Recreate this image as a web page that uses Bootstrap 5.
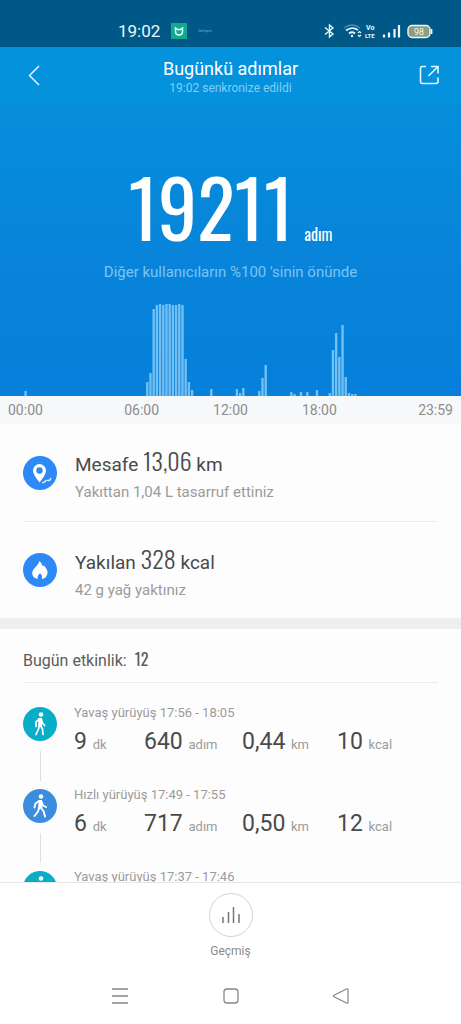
<!DOCTYPE html>
<html lang="tr">
<head>
<meta charset="utf-8">
<meta name="viewport" content="width=device-width, initial-scale=1">
<title>Bugünkü adımlar</title>
<link href="https://cdn.jsdelivr.net/npm/bootstrap@5.3.0/dist/css/bootstrap.min.css" rel="stylesheet">
<style>
  body { font-family: Roboto, sans-serif; background: #fdfdfd; color: #4a4a4a; }
  svg { display: block; flex-shrink: 0; }
  .slim { font-family: Oswald, "Roboto Condensed", Roboto, sans-serif; font-weight: 300; }
  .status-bar { background: #005887; color: #e9f7fd; height: 47px; padding: 14px 27px 0 118px; }
  .status-bar .clock { font-size: 17px; line-height: 24px; }
  .status-bar .tiny { font-size: 4px; color: #6fb0d4; }
  .hero { background: linear-gradient(#0492dc, #0884da 60%, #0680da); color: #fff; }
  .top-bar { height: 56px; padding: 0 16px; background: #0492dc; }
  .top-bar h1 { font-size: 18px; line-height: 22px; font-weight: 400; }
  .top-bar p { font-size: 12px; line-height: 16px; color: #84cdf3; }
  .icon-btn { border: 0; background: none; padding: 6px; color: #e4f6ff; }
  .total { height: 148px; padding-top: 64px; gap: 11px; }
  .total .num { font-size: 78px; line-height: 78px; font-weight: 400; }
  .total .unit { font-size: 16px; font-weight: 400; }
  .rank { font-size: 15px; line-height: 20px; color: #7cc5f3; padding-top: 11px; padding-bottom: 22px; }
  .chart { height: 92px; width: 100%; }
  .axis { background: #f7f8fa; color: #8d8d8d; font-size: 14px; line-height: 28px; padding: 0 8px; }
  .axis .mid { gap: 54px; }
  .stat { margin: 0 24px 0 23px; gap: 18px; height: 97px; }
  .stat + .stat { border-top: 1px solid #ebebeb; }
  .stat h2 { font-size: 19px; line-height: 26px; font-weight: 400; padding-top: 4px; }
  .stat h2 .slim { font-size: 24px; }
  .stat p { font-size: 15px; line-height: 20px; color: #9b9b9b; padding-top: 4px; }
  .band { height: 11px; background: #efefef; }
  .acts { padding: 0 23px; }
  .acts h2 { font-size: 16px; line-height: 22px; font-weight: 400; color: #5c5c5c; padding: 19px 0 10px; margin-bottom: 23px; border-bottom: 1px solid #ebebeb; }
  .acts h2 .slim { font-size: 16px; font-weight: 400; }
  .act { gap: 17px; height: 82px; }
  .rail { gap: 10px; padding-top: 1px; }
  .rail::after { content: ""; width: 1px; height: 30px; background: #dedede; }
  .act .when { font-size: 13px; line-height: 14px; color: #9b9b9b; }
  .vals { grid-template-columns: 70px 98px 95px auto; font-size: 23px; line-height: 28px; padding-top: 8px; }
  .vals small { font-size: 13px; color: #9b9b9b; }
  .bottom { border-top: 1px solid #e6e6e6; background: #fff; }
  .history { border: 0; background: none; padding: 10px 12px 0; color: #8a8a8a; font-size: 12px; line-height: 16px; }
  .history .ring { width: 44px; height: 44px; border: 1px solid #d4d4d4; margin-bottom: 6px; }
  .sysnav { padding: 19px 104px 14px; height: 62px; }
  .sysnav .icon-btn { color: #858585; }
</style>
</head>
<body class="vh-100 d-flex flex-column overflow-hidden">
<svg class="d-none">
  <symbol id="slow" viewBox="0 0 34 34"><circle cx="17" cy="17" r="17" fill="#08aec8"/><circle cx="18" cy="7.500" r="2.300" fill="#fff"/><path d="M16 12L13 15V19.500M16.500 18L15.500 22L13 27.500M17.500 18.500L19.500 22L20 27.500M18.500 12.500L19.500 16L21.500 18.500" fill="none" stroke="#fff" stroke-width="1.700" stroke-linecap="round" stroke-linejoin="round"/><path d="M15.200 11H19V20H15.200Z" fill="#fff"/></symbol>
  <symbol id="fast" viewBox="0 0 34 34"><circle cx="17" cy="17" r="17" fill="#3d8ddf"/><circle cx="18" cy="7.500" r="2.300" fill="#fff"/><path d="M16 12L12.500 14.500L11.500 18.500M16.500 18L15 22.500L11.500 27M17.500 18.500L20.500 22L22 27.500M18.500 12.500L20 16.500L23 18" fill="none" stroke="#fff" stroke-width="1.900" stroke-linecap="round" stroke-linejoin="round"/><path d="M15.500 11H19L19.500 19.500H15.200Z" fill="#fff"/></symbol>
</svg>

<div class="status-bar d-flex align-items-center justify-content-between flex-shrink-0">
  <div class="d-flex align-items-center">
    <span class="clock">19:02</span>
    <svg class="ms-2 me-2" width="22" height="16" viewBox="0 0 22 16"><rect x="3" width="16" height="16" fill="#10ab8f"/><path d="M7.500 5V8.500Q7.500 12 11 12T14.500 8.500V5L12.500 6.500H9.500Z" fill="none" stroke="#e6fff8" stroke-width="1.500"/></svg>
    <span class="tiny">Gelişmi</span>
  </div>
  <svg width="110" height="18" viewBox="0 0 110 18" fill="none" stroke="#eaf7fd">
    <path d="M1 5.500L9 12L5.500 15V3L9 6L1 12.500" stroke-width="1.400"/>
    <path d="M20 6Q28 0 36 6" stroke="#4d8eb0" stroke-width="1.500"/><path d="M22 8.500Q28 4 34 8M25 11.500Q28 9 31 11.500" stroke-width="1.700"/><circle cx="28" cy="14" r="1.200" fill="#eaf7fd" stroke="none"/><path d="M34 11L35.500 9.500L37 11M34 13L35.500 14.500L37 13" stroke-width="1.100"/>
    <g fill="#eaf7fd" stroke="none" font-family="Roboto, sans-serif" font-weight="700"><text x="42" y="8" font-size="7">Vo</text><text x="41" y="16" font-size="6">LTE</text></g>
    <path d="M60 12.500V15.500M65 10.500V15.500M70.500 7V15.500M75 3V15.500" stroke-width="2.200"/>
    <rect x="84" y="3.500" width="22" height="12" rx="4" fill="#919d79" stroke-width="1.400"/><path d="M107.500 7V12" stroke-width="1.800"/>
    <text x="90" y="13" font-size="9" fill="#eaf7fd" stroke="none" font-family="Roboto, sans-serif">98</text>
  </svg>
</div>

<main class="flex-grow-1 overflow-hidden">
  <section class="hero">
    <header class="top-bar d-flex align-items-center justify-content-between">
      <button class="icon-btn" type="button" aria-label="Geri"><svg width="24" height="24" viewBox="0 0 24 24" fill="none" stroke="currentColor" stroke-width="1.500"><path d="M17 3L7.500 12.500L17 22"/></svg></button>
      <div class="text-center pt-1">
        <h1 class="m-0">Bugünkü adımlar</h1>
        <p class="m-0">19:02 senkronize edildi</p>
      </div>
      <button class="icon-btn" type="button" aria-label="Paylaş"><svg width="24" height="24" viewBox="2 0 24 24" fill="none" stroke="currentColor" stroke-width="1.600"><path d="M13 3.500H9Q7.500 3.500 7.500 5V18.500Q7.500 20.500 9.500 20.500H23Q25 20.500 25 18.500V14.500M18 3.500H25V10.500M25 3.500L15.500 13"/></svg></button>
    </header>
    <div class="total slim d-flex justify-content-center align-items-baseline">
      <span class="num">19211</span><span class="unit">adım</span>
    </div>
    <p class="rank text-center m-0">Diğer kullanıcıların %100 'sinin önünde</p>
    <svg class="chart" viewBox="0 0 144 92" preserveAspectRatio="none" fill="none" stroke="#72bff3" stroke-width="0.75" role="img" aria-label="Günlük adım grafiği">
      <path d="M8 92v-5M46 92v-14M47 92v-23M48 92v-87M49 92v-91M50 92v-92M51 92v-91M52 92v-92M53 92v-92M54 92v-91M55 92v-91M56 92v-92M57 92v-91M58 92v-37M59 92v-14M60 92v-6M66 92v-7M74 92v-7M75 92v-3M76 92v-8M81 92v-5M82 92v-18M83 92v-31M91 92v-4M92 92v-2M94 92v-4M96 92v-4M99 92v-6M103 92v-3M104 92v-46M105 92v-63M106 92v-39M107 92v-71M108 92v-19M109 92v-3M110 92v-2M111 92v-2"/>
    </svg>
  </section>
  <div class="axis d-flex justify-content-between">
    <span>00:00</span>
    <div class="mid d-flex"><span>06:00</span><span>12:00</span><span>18:00</span></div>
    <span>23:59</span>
  </div>

  <section>
    <div class="stat d-flex align-items-center">
      <svg width="34" height="34" viewBox="0 0 34 34"><circle cx="17" cy="17" r="17" fill="#2c89f5"/><path fill-rule="evenodd" d="M16.500 26.500Q10 18.500 10 14.500A6.500 6.500 0 0 1 23 14.500Q23 18.500 16.500 26.500ZM16.500 11.300A3.200 3.200 0 1 0 16.500 17.700A3.200 3.200 0 1 0 16.500 11.300Z" fill="#fff"/><path d="M19 26.500Q21 27 22 25.500T25 24.500T28 22" fill="none" stroke="#d9eaff" stroke-width="1.400"/></svg>
      <div><h2 class="m-0">Mesafe <span class="slim">13,06</span> km</h2><p class="m-0">Yakıttan 1,04 L tasarruf ettiniz</p></div>
    </div>
    <div class="stat d-flex align-items-center">
      <svg width="34" height="34" viewBox="0 0 34 34"><circle cx="17" cy="17" r="17" fill="#2c89f5"/><path d="M16.500 8Q19 10 19.500 13L21 12.500Q25 17 24.500 20Q24 25 19 26V23Q18.500 21 17 20.500Q14.500 21.500 14.500 26Q9 24.500 9.200 19.500Q9.500 17 13 13.500Q15.500 11 16.500 8Z" fill="#fff"/></svg>
      <div><h2 class="m-0">Yakılan <span class="slim">328</span> kcal</h2><p class="m-0">42 g yağ yaktınız</p></div>
    </div>
  </section>
  <div class="band"></div>

  <section class="acts">
    <h2>Bugün etkinlik: &nbsp;<span class="slim">12</span></h2>
    <div class="act d-flex">
      <div class="rail d-flex flex-column align-items-center"><svg width="34" height="34"><use href="#slow"/></svg></div>
      <div><div class="when">Yavaş yürüyüş 17:56 - 18:05</div>
        <div class="vals d-grid"><span>9 <small>dk</small></span><span>640 <small>adım</small></span><span>0,44 <small>km</small></span><span>10 <small>kcal</small></span></div></div>
    </div>
    <div class="act d-flex">
      <div class="rail d-flex flex-column align-items-center"><svg width="34" height="34"><use href="#fast"/></svg></div>
      <div><div class="when">Hızlı yürüyüş 17:49 - 17:55</div>
        <div class="vals d-grid"><span>6 <small>dk</small></span><span>717 <small>adım</small></span><span>0,50 <small>km</small></span><span>12 <small>kcal</small></span></div></div>
    </div>
    <div class="act d-flex">
      <div class="rail d-flex flex-column align-items-center"><svg width="34" height="34"><use href="#slow"/></svg></div>
      <div class="when">Yavaş yürüyüş 17:37 - 17:46</div>
    </div>
  </section>
</main>

<footer class="bottom flex-shrink-0">
  <div class="text-center">
    <button class="history" type="button">
      <span class="ring rounded-circle d-flex align-items-center justify-content-center mx-auto"><svg width="20" height="20" viewBox="0 0 20 20" fill="none" stroke="#777" stroke-width="1.500"><path d="M2 12V18M7.500 7V18M12.500 2V18M18 9V18"/></svg></span>
      Geçmiş
    </button>
  </div>
  <nav class="sysnav d-flex justify-content-between align-items-center">
    <button class="icon-btn" type="button" aria-label="Son uygulamalar"><svg width="20" height="20" viewBox="0 0 20 20" fill="none" stroke="currentColor" stroke-width="1.300"><path d="M2 3H18M2 10H18M2 17H18"/></svg></button>
    <button class="icon-btn" type="button" aria-label="Ana ekran"><svg width="20" height="20" viewBox="0 0 20 20" fill="none" stroke="currentColor" stroke-width="1.300"><rect x="3" y="3" width="14" height="14" rx="3"/></svg></button>
    <button class="icon-btn" type="button" aria-label="Geri dön"><svg width="20" height="20" viewBox="0 0 20 20" fill="none" stroke="currentColor" stroke-width="1.200" stroke-linejoin="round"><path d="M3 9.300L15.500 3Q17 2.500 17 4V16Q17 17.500 15.500 17L3 10.700Q2 10 3 9.300Z"/></svg></button>
  </nav>
</footer>
<script src="https://cdn.jsdelivr.net/npm/bootstrap@5.3.0/dist/js/bootstrap.bundle.min.js"></script>
</body>
</html>
